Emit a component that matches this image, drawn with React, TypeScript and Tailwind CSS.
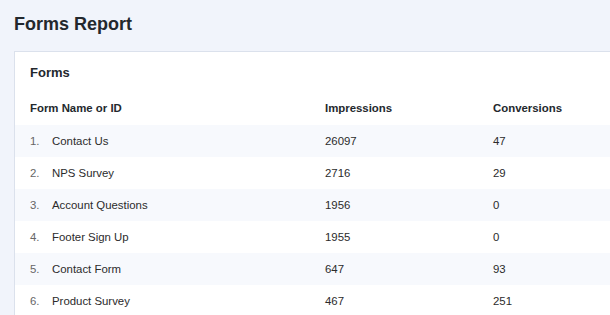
import React from 'react';

type FormRow = { name: string; impressions: number; conversions: number };

const rows: FormRow[] = [
  { name: 'Contact Us', impressions: 26097, conversions: 47 },
  { name: 'NPS Survey', impressions: 2716, conversions: 29 },
  { name: 'Account Questions', impressions: 1956, conversions: 0 },
  { name: 'Footer Sign Up', impressions: 1955, conversions: 0 },
  { name: 'Contact Form', impressions: 647, conversions: 93 },
  { name: 'Product Survey', impressions: 467, conversions: 251 },
];

const App: React.FC = () => {
  return (
    <div className="min-h-screen bg-[#f1f4fb] pl-[14px] pt-[12px] font-['Liberation_Sans',Arial,sans-serif] text-[#2b2b2b]">
      <h1 className="text-[18px] font-bold leading-[24px] text-[#23282d]">Forms Report</h1>
      <div className="mt-[15px] border-t border-l border-[#dbe1ec] bg-white">
        <h2 className="pl-[15px] pt-[11px] pb-[9px] text-[13px] font-bold leading-[20px] text-[#23282d]">Forms</h2>
        <div className="grid h-[33px] grid-cols-[295px_168px_1fr] items-center pl-[15px] pt-[1px] text-[11.4px] font-bold text-[#23282d]">
          <div>Form Name or ID</div>
          <div>Impressions</div>
          <div>Conversions</div>
        </div>
        {rows.map((r, i) => (
          <div
            key={r.name}
            className={`grid h-[32px] grid-cols-[295px_168px_1fr] items-center pl-[15px] pt-[1px] text-[11.4px] ${i % 2 === 0 ? 'bg-[#f7f9fd]' : 'bg-white'}`}
          >
            <div className="flex items-center">
              <span className="w-[22px] text-[#666]">{i + 1}.</span>
              <span>{r.name}</span>
            </div>
            <div>{r.impressions}</div>
            <div>{r.conversions}</div>
          </div>
        ))}
      </div>
    </div>
  );
};

export default App;
